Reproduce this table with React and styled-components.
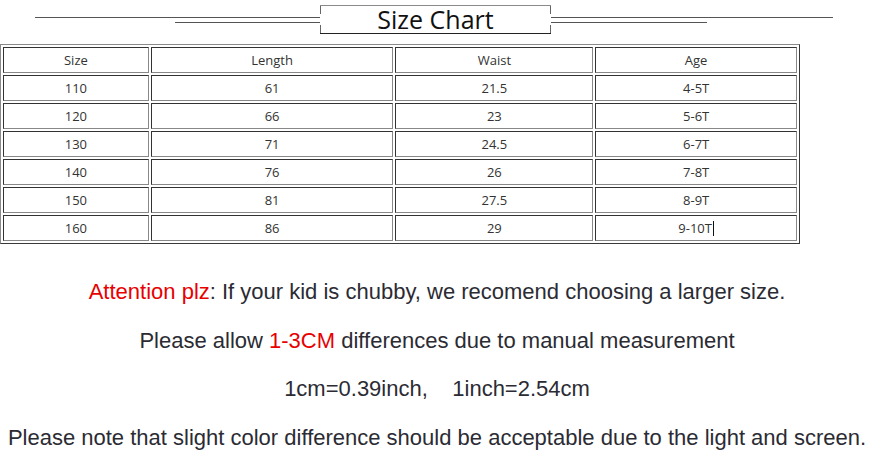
import React from "react";
import styled, { createGlobalStyle } from "styled-components";

const GlobalStyle = createGlobalStyle`
    html, body {
        margin: 0;
        padding: 0;
        background: #fff;
    }
    body {
        font-family: "Liberation Sans", Arial, sans-serif;
        color: #333;
    }
`

const rows = [
    ["Size", "Length", "Waist", "Age"],
    ["110", "61", "21.5", "4-5T"],
    ["120", "66", "23", "5-6T"],
    ["130", "71", "24.5", "6-7T"],
    ["140", "76", "26", "7-8T"],
    ["150", "81", "27.5", "8-9T"],
    ["160", "86", "29", "9-10T"],
];

const colWidths = ["18.5%", "30.8%", "25.1%", "25.6%"];

const App = () => {
    return (
        <React.Fragment>
            <GlobalStyle/>
            <Page>
                <TitleBar>
                    <Deco side="left">
                        <Rule/>
                        <Rule short="145px"/>
                    </Deco>
                    <TitleBox>Size Chart</TitleBox>
                    <Deco side="right">
                        <Rule/>
                        <Rule short="156px"/>
                    </Deco>
                </TitleBar>
                <Chart>
                    <colgroup>
                        {colWidths.map((w, i) => <col key={i} style={{width: w}}/>)}
                    </colgroup>
                    <tbody>
                        {rows.map((row, r) => (
                            <tr key={r}>
                                {row.map((cell, c) => (
                                    <Cell key={c}>
                                        {cell}
                                        {r === rows.length - 1 && c === row.length - 1 && <Caret/>}
                                    </Cell>
                                ))}
                            </tr>
                        ))}
                    </tbody>
                </Chart>
                <Notes>
                    <Note><Red>Attention plz</Red>: If your kid is chubby, we recomend choosing a larger size.</Note>
                    <Note>Please allow <Red>1-3CM</Red> differences due to manual measurement</Note>
                    <Note>1cm=0.39inch,&nbsp;&nbsp;&nbsp; 1inch=2.54cm</Note>
                    <Note>Please note that slight color difference should be acceptable due to the light and screen.</Note>
                </Notes>
            </Page>
        </React.Fragment>
    );
};

const Page = styled.div`
    width: 874px;
`
const TitleBar = styled.div`
    display: flex;
    height: 44px;
`
const Deco = styled.div`
    display: flex;
    flex-direction: column;
    align-items: ${props => props.side === "left" ? "flex-end" : "flex-start"};
    gap: 4px;
    padding-top: 17px;
    margin-left: ${props => props.side === "left" ? "35px" : "0"};
    width: ${props => props.side === "left" ? "285px" : "282px"};
`
const Rule = styled.div`
    height: 1px;
    width: ${props => props.short || "100%"};
    background: #555;
`
const TitleBox = styled.div`
    box-sizing: border-box;
    margin-top: 5px;
    width: 231px;
    height: 29px;
    border-top: 1px solid #8a8a8a;
    border-bottom: 1px solid #222;
    background:
        linear-gradient(#666, #666) left top / 1px 8px no-repeat,
        linear-gradient(#666, #666) left bottom / 1px 8px no-repeat,
        linear-gradient(#666, #666) right top / 1px 8px no-repeat,
        linear-gradient(#666, #666) right bottom / 1px 8px no-repeat;
    font-family: "Open Sans", "Noto Sans", sans-serif;
    font-size: 25px;
    line-height: 26px;
    color: #111;
    text-align: center;
`
const Chart = styled.table`
    box-sizing: border-box;
    width: 800px;
    table-layout: fixed;
    border-collapse: separate;
    border-spacing: 2px;
    border: 1px solid;
    border-color: #8a8a8a #3a3a3a #3a3a3a #8a8a8a;
`
const Cell = styled.td`
    height: 24px;
    padding: 0;
    border: 1px solid;
    border-color: #333 #888 #888 #333;
    text-align: center;
    font-family: "Open Sans", "Noto Sans", sans-serif;
    font-size: 13px;
    color: #333;
`
const Caret = styled.span`
    display: inline-block;
    width: 1px;
    height: 15px;
    margin-left: 1px;
    vertical-align: -3px;
    background: #111;
`
const Notes = styled.div`
    margin-top: 24px;
    text-align: center;
`
const Note = styled.p`
    margin: 0;
    font-size: 22px;
    line-height: 48.6px;
    color: #2b2b33;
    white-space: nowrap;
`
const Red = styled.span`
    color: #e80000;
`

export default App;
